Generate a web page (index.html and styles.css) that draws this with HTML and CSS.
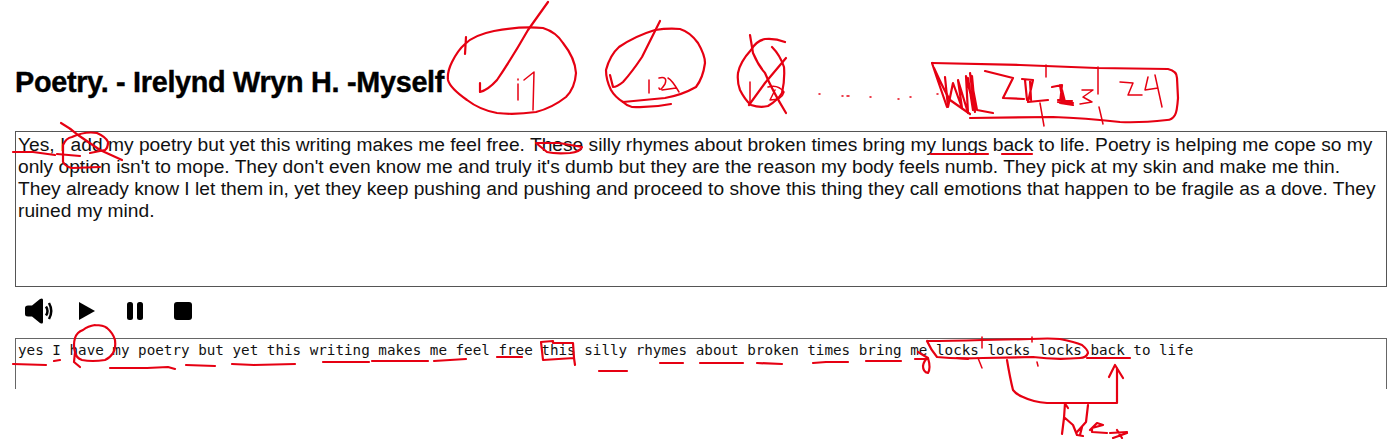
FILE: index.html
```html
<!DOCTYPE html>
<html>
<head>
    <link rel="stylesheet" href="styles.css">
</head>
<body>
    <h1 class="title">Poetry. - Irelynd Wryn H. -Myself</h1>

    <div class="poem">Yes, I add my poetry but yet this writing makes me feel free. These silly rhymes about broken times bring my lungs back to life. Poetry is helping me cope so my only option isn't to mope. They don't even know me and truly it's dumb but they are the reason my body feels numb. They pick at my skin and make me thin. They already know I let them in, yet they keep pushing and pushing and proceed to shove this thing they call emotions that happen to be fragile as a dove. They ruined my mind.</div>

    <!-- Player Controls -->
    <div class="controls">
        <svg class="icon icon-sound" viewBox="0 0 28 26">
            <path class="fill" d="M0 10Q0 7.500 3 7.500H7L15 1Q18 -0.500 18 2V24Q18 26.500 15 25L7 18.500H3Q0 18.500 0 16Z"/>
            <path class="wave" d="M21 8.500Q24 13 21 17.500M24 5Q28.500 13 24 21"/>
        </svg>
        <svg class="icon icon-play" viewBox="0 0 16 18">
            <path class="fill" d="M0 0L16 9L0 18Z"/>
        </svg>
        <svg class="icon icon-pause" viewBox="0 0 16 18">
            <rect class="fill" x="0" y="0" width="6" height="18" rx="2.500"/>
            <rect class="fill" x="10" y="0" width="6" height="18" rx="2.500"/>
        </svg>
        <svg class="icon icon-stop" viewBox="0 0 18 18">
            <rect class="fill" x="0" y="0" width="18" height="18" rx="3"/>
        </svg>
    </div>

    <div class="transcript">yes I have my poetry but yet this writing makes me feel free this silly rhymes about broken times bring me locks locks locks back to life</div>

    <!-- Red pen marks drawn over the page -->
    <svg class="marks" viewBox="0 0 1391 439">
        <!-- circle 11 -->
        <path d="M466 37L465 54M465 44Q474 35 494 31Q520 26 543 28Q556 32 563 43Q575 58 576 73Q575 88 566 97Q552 108 536 112Q515 115 497 113Q480 110 467 100Q450 88 448 80Q447 72 452 62Q458 50 465 44"/>
        <path d="M548 2L528 30Q512 58 497 80Q488 90 480 92L480 83"/>
        <path class="thin" d="M518 84L518 100M518 79V80M524 80L534 72L533 110"/>
        <!-- circle 12 -->
        <path d="M655 30Q668 28 680 29Q690 32 698 43Q705 55 705 63Q703 78 696 87Q682 95 665 98L623 102Q615 97 611 90Q606 80 606 70Q610 55 619 47Q635 36 655 30"/>
        <path d="M660 21L642 57Q632 72 623 82Q617 87 613 87L610 75"/>
        <path d="M623 102Q627 106 632 107Q652 108 671 104"/>
        <path class="thin" d="M649 80V93M659 78Q668 76 665 84Q660 92 659 88M668 78Q672 80 679 92M662 90L676 88"/>
        <!-- circle with a cross -->
        <path d="M785 42Q775 38 765 39Q756 41 751 50Q740 62 738 73Q737 82 740 90Q745 100 751 105Q760 108 768 106Q778 100 782 93Q785 80 784 67Q780 55 772 47"/>
        <path d="M750 35L753 53Q758 65 765 73Q772 90 786 113"/>
        <path d="M786 58L765 83L749 105"/>
        <path class="thin" d="M750 82V103M768 87Q778 84 784 92Q782 100 770 100M775 90L770 100"/>
        <!-- dots -->
        <path class="thin" d="M819 94h1M842 96h1M847 96h2M870 97h1M898 99h1M910 97h1M937 94h1"/>
        <!-- box 22 23 24 -->
        <path d="M932 63L1020 65L1097 68L1168 69Q1177 71 1177 78L1178 98Q1177 112 1175 115Q1172 120 1167 120Q1140 123 1120 122Q1085 118 1053 117L970 118"/>
        <path d="M932 63L937 78L947 107M934 68Q945 92 950 100L970 114"/>
        <path d="M945 77L948 107L953 83L962 108L958 80L968 113L966 76L975 112L970 73L977 110L993 113M968 78L973 110M972 76L975 108"/>
        <path d="M985 71L1013 78L1003 98L1024 99M1022 79L1033 80L1028 102L1048 100M1025 80L1027 100M1030 80L1031 100"/>
        <path d="M1052 87L1062 85L1060 103L1073 105M1060 85L1063 103M1058 102L1073 103M1058 100L1072 101M1062 90L1065 102"/>
        <path class="thin" d="M1082 90L1093 90L1083 97L1092 102L1080 104M1120 82L1133 83L1128 95L1142 95M1148 77L1145 90L1158 88M1155 75L1162 107"/>
        <path class="thin" d="M1046 65V77M1040 103L1044 126M1098 67V94M1099 107L1103 124"/>
        <!-- first text box -->
        <path d="M13 152L33 152L55 155M57 154L80 156M61 123Q70 128 78 135L100 150L122 160"/>
        <path d="M63 145Q66 138 72 137Q85 131 97 133Q106 137 108 142Q108 148 105 150L90 153M63 145L63 162Q66 167 72 168L100 167"/>
        <path d="M536 143L559 143L582 147Q580 152 570 153Q555 154 547 152L536 143"/>
        <path d="M931 154L988 154M1002 154L1032 154"/>
        <!-- second text box -->
        <path d="M95 325Q103 325 107 328Q113 333 115 340Q116 348 113 353Q110 358 105 360Q92 362 82 360Q76 358 75 352Q73 345 75 338Q77 332 83 330Q88 326 95 325M75 352L74 362L80 367"/>
        <path d="M13 364L46 365M54 361L60 360M110 368L147 368L168 367L175 369M186 365L215 366M232 364L254 365L295 364M323 362L369 362M372 361L428 361M434 361L466 359M497 357L522 357"/>
        <path d="M541 342L553 341L553 343L573 343L574 358L543 360L541 342M574 358L575 365M599 371H627"/>
        <path d="M660 363H683M700 363H743M757 363L782 364M813 363L826 362L848 362M866 361H901"/>
        <path d="M915 359H928M918 352L928 358Q931 368 928 373Q923 372 923 366Q924 360 928 358"/>
        <path d="M927 341Q950 341 982 340L1030 339Q1050 338 1060 339Q1075 342 1082 345Q1088 350 1088 353Q1086 358 1080 358Q1055 360 1033 357L983 358Q955 359 937 357Q931 350 927 341"/>
        <path class="thin" d="M982 337V348M978 358L982 368M1032 337V342M1037 362L1038 366"/>
        <path d="M957 358L968 359M1087 358L1130 358"/>
        <path d="M1007 360Q1010 378 1013 390Q1017 395 1023 397Q1033 402 1047 403L1117 403L1117 368M1109 377L1115 365L1123 378"/>
        <path d="M1065 403L1064 418L1062 434M1066 405L1068 408M1065 418L1073 425L1077 435L1083 436M1082 427L1080 435M1088 405L1086 422L1077 432"/>
        <path d="M1090 430L1097 423L1103 425L1092 428L1092 432L1107 433M1110 433L1127 432M1117 430L1122 438M1127 433L1113 438"/>
    </svg>
</body>
</html>
```

FILE: styles.css
```css
body {
    font-family: "Liberation Sans", Arial, sans-serif;
    margin: 0;
    padding: 0 4px 0 15px;
    height: 439px;
    overflow: hidden;
    background-color: #fff;
    color: #111;
}

.title {
    margin: 0;
    padding-top: 65px;
    box-sizing: border-box;
    height: 131px;
    font-size: 28.8px;
    line-height: 34px;
    letter-spacing: -0.3px;
    -webkit-text-stroke: 0.4px #000;
    color: #000;
}

.poem {
    box-sizing: border-box;
    height: 156px;
    padding: 2px 2px;
    border: 1px solid #555;
    font-size: 19.2px;
    line-height: 22px;
}

.controls {
    box-sizing: border-box;
    display: flex;
    align-items: center;
    height: 51px;
    padding: 0 0 3px 10px;
}

.icon {
    display: block;
    height: 18px;
}

.fill {
    fill: #000;
}

.wave {
    fill: none;
    stroke: #000;
    stroke-width: 2.500;
}

.icon-sound {
    width: 28px;
    height: 26px;
}

.icon-play {
    width: 16px;
    margin-left: 26px;
}

.icon-pause {
    width: 16px;
    margin-left: 32px;
}

.icon-stop {
    width: 18px;
    margin-left: 31px;
}

.transcript {
    box-sizing: border-box;
    height: 51px;
    padding: 3px 2px;
    border: 1px solid #666;
    border-bottom: none;
    font-family: "DejaVu Sans Mono", monospace;
    font-size: 14.25px;
    line-height: 17px;
    white-space: nowrap;
}

.marks {
    position: absolute;
    top: 0;
    left: 0;
    width: 1391px;
    height: 439px;
    pointer-events: none;
}

.marks path {
    fill: none;
    stroke: #e60012;
    stroke-width: 2.200;
    stroke-linecap: round;
    stroke-linejoin: round;
}

.marks .thin {
    stroke-width: 1.500;
}
```
